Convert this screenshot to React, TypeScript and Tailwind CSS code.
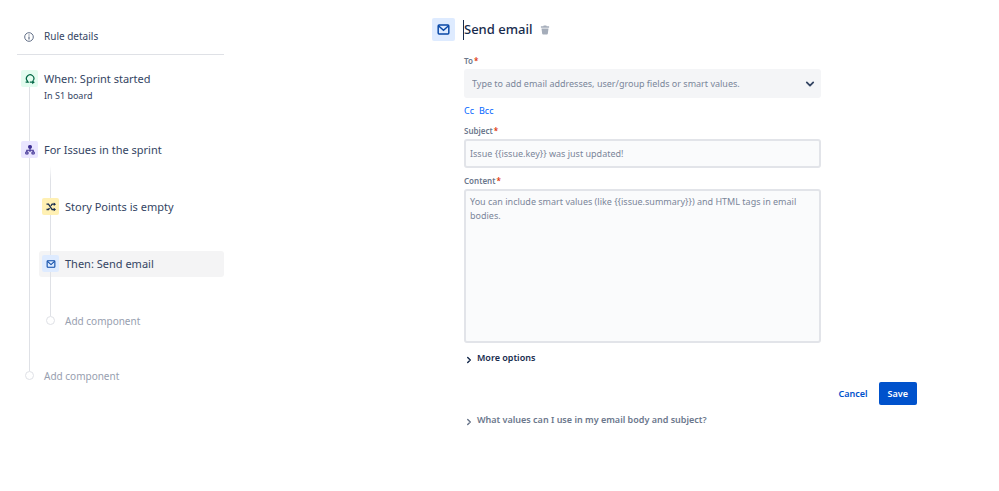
import { ReactNode, useState } from "react";

const tones = {
  green: "bg-[#e3fcef] text-[#006644]",
  purple: "bg-[#eae6ff] text-[#403294]",
  yellow: "bg-[#fff0b3] text-[#172b4d]",
  blue: "bg-[#deebff] text-[#0747a6]",
};

function SprintIcon() {
  return (
    <svg viewBox="0 0 12 12" className="size-3" fill="none" stroke="currentColor" strokeWidth="1.2" aria-hidden="true">
      <path d="M1.6 9.2H4.2L3.4 8A3.7 3.7 0 1 1 9.2 7.6M5.8 9.2h3.4" />
      <path d="M8.2 7.2 10.8 9.2 8.2 11.2Z" fill="currentColor" stroke="none" />
    </svg>
  );
}

function BranchIcon() {
  return (
    <svg viewBox="0 0 12 12" className="size-3" fill="none" stroke="currentColor" aria-hidden="true">
      <rect x="4.6" y="1.6" width="2.8" height="2.6" rx=".5" fill="currentColor" />
      <path d="M6 4v2.2M2.8 8V6.3h6.4V8M6 6.3V8" strokeWidth="1.1" />
      <rect x="1.8" y="8" width="2.2" height="2" rx=".4" strokeWidth="1.2" />
      <rect x="8" y="8" width="2.2" height="2" rx=".4" strokeWidth="1.2" />
    </svg>
  );
}

function ShuffleIcon() {
  return (
    <svg viewBox="0 0 12 12" className="size-3" fill="none" stroke="currentColor" strokeWidth="1.3" aria-hidden="true">
      <path d="M1.5 3.2h2l3.6 5.3h2.4M1.5 8.5h2l1-1.4M5.9 4.8l1.2-1.6h2.4" />
      <path d="M8.8 1.4 11 3.2 8.8 5ZM8.8 6.7 11 8.5 8.8 10.3Z" fill="currentColor" stroke="none" />
    </svg>
  );
}

function MailIcon({ className }: { className: string }) {
  return (
    <svg viewBox="0 0 14 12" className={className} fill="none" stroke="currentColor" strokeWidth="1.6" aria-hidden="true">
      <rect x="1.2" y="1.2" width="11.6" height="9.6" rx="1" />
      <path d="M1.8 2.2 7 6.8l5.2-4.6" />
    </svg>
  );
}

function Chevron({ className }: { className: string }) {
  return (
    <svg viewBox="0 0 10 10" className={className} fill="none" stroke="currentColor" strokeWidth="1.8" strokeLinecap="round" strokeLinejoin="round" aria-hidden="true">
      <path d="M1.8 3.4 5 6.6l3.2-3.2" />
    </svg>
  );
}

function Line({ className }: { className: string }) {
  return <span className={`block w-px bg-[#dfe1e6] ${className}`} />;
}

type StepProps = {
  label: string;
  tone: keyof typeof tones;
  icon: ReactNode;
  first?: boolean;
  selected?: boolean;
};

function Step({ label, tone, icon, first, selected }: StepProps) {
  return (
    <button
      type="button"
      className={`flex h-[26px] w-full gap-[6px] rounded-[3px] pl-[3px] text-left text-[11px] text-[#344563] ${
        selected ? "bg-[#f4f4f5]" : ""
      }`}
    >
      <span className="flex h-full w-[17px] flex-col items-center">
        <Line className={first ? "invisible h-1" : "h-1"} />
        <span className={`flex size-[17px] items-center justify-center rounded-[2px] ${tones[tone]}`}>
          {icon}
        </span>
        <Line className="flex-1" />
      </span>
      <span className="self-center whitespace-nowrap">{label}</span>
    </button>
  );
}

function AddStep() {
  return (
    <button type="button" className="flex h-[26px] w-full gap-[6px] pl-[3px] text-left text-[10px] text-[#97a0af]">
      <span className="flex h-full w-[17px] flex-col items-center">
        <Line className="h-[8px]" />
        <span className="size-[9px] rounded-full border border-[#dfe1e6] bg-white" />
      </span>
      <span className="self-center">Add component</span>
    </button>
  );
}

function RuleSidebar() {
  return (
    <nav aria-label="Rule" className="w-[224px] shrink-0 pl-[17px] pt-[19px]">
      <button
        type="button"
        className="flex h-9 w-full items-center gap-[10px] border-b border-[#dfe1e6] pl-[7px] text-[10px] text-[#344563]"
      >
        <svg viewBox="0 0 10 10" className="size-[10px]" fill="none" stroke="#505f79" aria-hidden="true">
          <circle cx="5" cy="5" r="4.3" strokeWidth=".9" />
          <path d="M5 4.5v3M5 2.5v1.1" strokeWidth="1.1" />
        </svg>
        Rule details
      </button>
      <ol className="ml-px mt-[11px]">
        <li>
          <Step label="When: Sprint started" tone="green" icon={<SprintIcon />} first />
          <div className="flex h-[45px] gap-[14px] pl-[11px]">
            <Line className="h-full" />
            <span className="-mt-1 text-[9px] leading-4 text-[#344563]">In S1 board</span>
          </div>
        </li>
        <li>
          <Step label="For Issues in the sprint" tone="purple" icon={<BranchIcon />} />
          <div className="flex gap-[9px] pl-[11px]">
            <Line className="" />
            <ol className="flex-1 pb-[29px] pt-[3px]">
              <li>
                <span className="ml-[11px] block h-[28px] w-px bg-linear-to-b from-white to-[#dfe1e6] to-50%" />
                <Step label="Story Points is empty" tone="yellow" icon={<ShuffleIcon />} />
                <Line className="ml-[11px] h-[31px]" />
              </li>
              <li>
                <Step label="Then: Send email" tone="blue" icon={<MailIcon className="h-[8px] w-[10px]" />} selected />
                <Line className="ml-[11px] h-[31px]" />
              </li>
              <li>
                <AddStep />
              </li>
            </ol>
          </div>
        </li>
        <li>
          <AddStep />
        </li>
      </ol>
    </nav>
  );
}

function FieldLabel({ htmlFor, children }: { htmlFor: string; children: ReactNode }) {
  return (
    <label htmlFor={htmlFor} className="flex h-4 gap-px text-[8px] font-semibold leading-4 text-[#6b778c]">
      {children}
      <span className="text-[#de350b]">*</span>
    </label>
  );
}

function EmailForm() {
  const [to, setTo] = useState("");
  const [subject, setSubject] = useState("");
  const [content, setContent] = useState("");

  return (
    <form className="ml-52 mr-[82px] flex-1 pt-[18px]" onSubmit={(event) => event.preventDefault()}>
      <header className="flex h-[23px] items-center">
        <span className="flex size-[23px] items-center justify-center rounded-[2px] bg-[#deebff] text-[#0747a6]">
          <MailIcon className="h-[11px] w-[13px]" />
        </span>
        <h1 className="ml-2 flex h-5 items-center border-l border-[#172b4d] text-[13px] font-medium text-[#172b4d]">
          Send email
        </h1>
        <button type="button" aria-label="Delete component" className="ml-2 text-[#a5adba]">
          <svg viewBox="0 0 10 10" className="size-[10px]" fill="currentColor" aria-hidden="true">
            <path d="M3.7.6h2.6l.4.7h2.4v1.4H.9V1.3h2.4ZM1.5 3.4h7l-.7 5.3q-.1.8-.9.8H3.1q-.8 0-.9-.8Z" />
          </svg>
        </button>
      </header>

      <div className="ml-8 mr-24 mt-3">
        <FieldLabel htmlFor="to">To</FieldLabel>
        <div className="flex h-[29px] items-center rounded-[3px] bg-[#f4f5f7] pl-2 pr-[6px]">
          <input
            id="to"
            role="combobox"
            aria-expanded={false}
            value={to}
            onChange={(event) => setTo(event.target.value)}
            placeholder="Type to add email addresses, user/group fields or smart values."
            className="min-w-0 flex-1 text-[9px] text-[#172b4d] outline-none placeholder:text-[#7a869a]"
          />
          <button type="button" aria-label="Show options" className="text-[#344563]">
            <Chevron className="size-[10px]" />
          </button>
        </div>
        <div className="mt-[5px] flex h-4 gap-[5px] text-[9px] leading-4 text-[#0065ff]">
          <button type="button">Cc</button>
          <button type="button">Bcc</button>
        </div>

        <div className="mt-1">
          <FieldLabel htmlFor="subject">Subject</FieldLabel>
          <input
            id="subject"
            value={subject}
            onChange={(event) => setSubject(event.target.value)}
            placeholder="Issue {{issue.key}} was just updated!"
            className="block h-[29px] w-full rounded-[3px] border-2 border-[#e2e4e9] bg-[#fafbfc] px-1 text-[9px] text-[#172b4d] outline-none placeholder:text-[#7a869a]"
          />
        </div>

        <div className="mt-[5px]">
          <FieldLabel htmlFor="content">Content</FieldLabel>
          <textarea
            id="content"
            value={content}
            onChange={(event) => setContent(event.target.value)}
            placeholder="You can include smart values (like {{issue.summary}}) and HTML tags in email bodies."
            className="block h-[154px] w-full resize-none rounded-[3px] border-2 border-[#e2e4e9] bg-[#fafbfc] px-1 py-1 text-[9px] leading-[14px] text-[#172b4d] outline-none placeholder:text-[#7a869a]"
          />
        </div>

        <button type="button" className="mt-[7px] flex h-4 items-center gap-1 pl-px text-[9px] font-semibold text-[#172b4d]">
          <Chevron className="mt-1 size-2 -rotate-90" />
          More options
        </button>
      </div>

      <div className="mt-[16px] flex h-[23px] justify-end gap-[3px] text-[9px] font-semibold">
        <button type="button" className="px-2 text-[#0052cc]">
          Cancel
        </button>
        <button type="submit" className="rounded-[2px] bg-[#0052cc] px-[9px] text-white">
          Save
        </button>
      </div>

      <button type="button" className="ml-8 mt-[7px] flex h-4 items-center gap-1 pl-px text-[9px] font-semibold text-[#6b778c]">
        <Chevron className="mt-1 size-2 -rotate-90" />
        What values can I use in my email body and subject?
      </button>
    </form>
  );
}

export default function App() {
  return (
    <main className="flex min-h-screen bg-white pb-8 font-['Noto_Sans',sans-serif]">
      <RuleSidebar />
      <EmailForm />
    </main>
  );
}
